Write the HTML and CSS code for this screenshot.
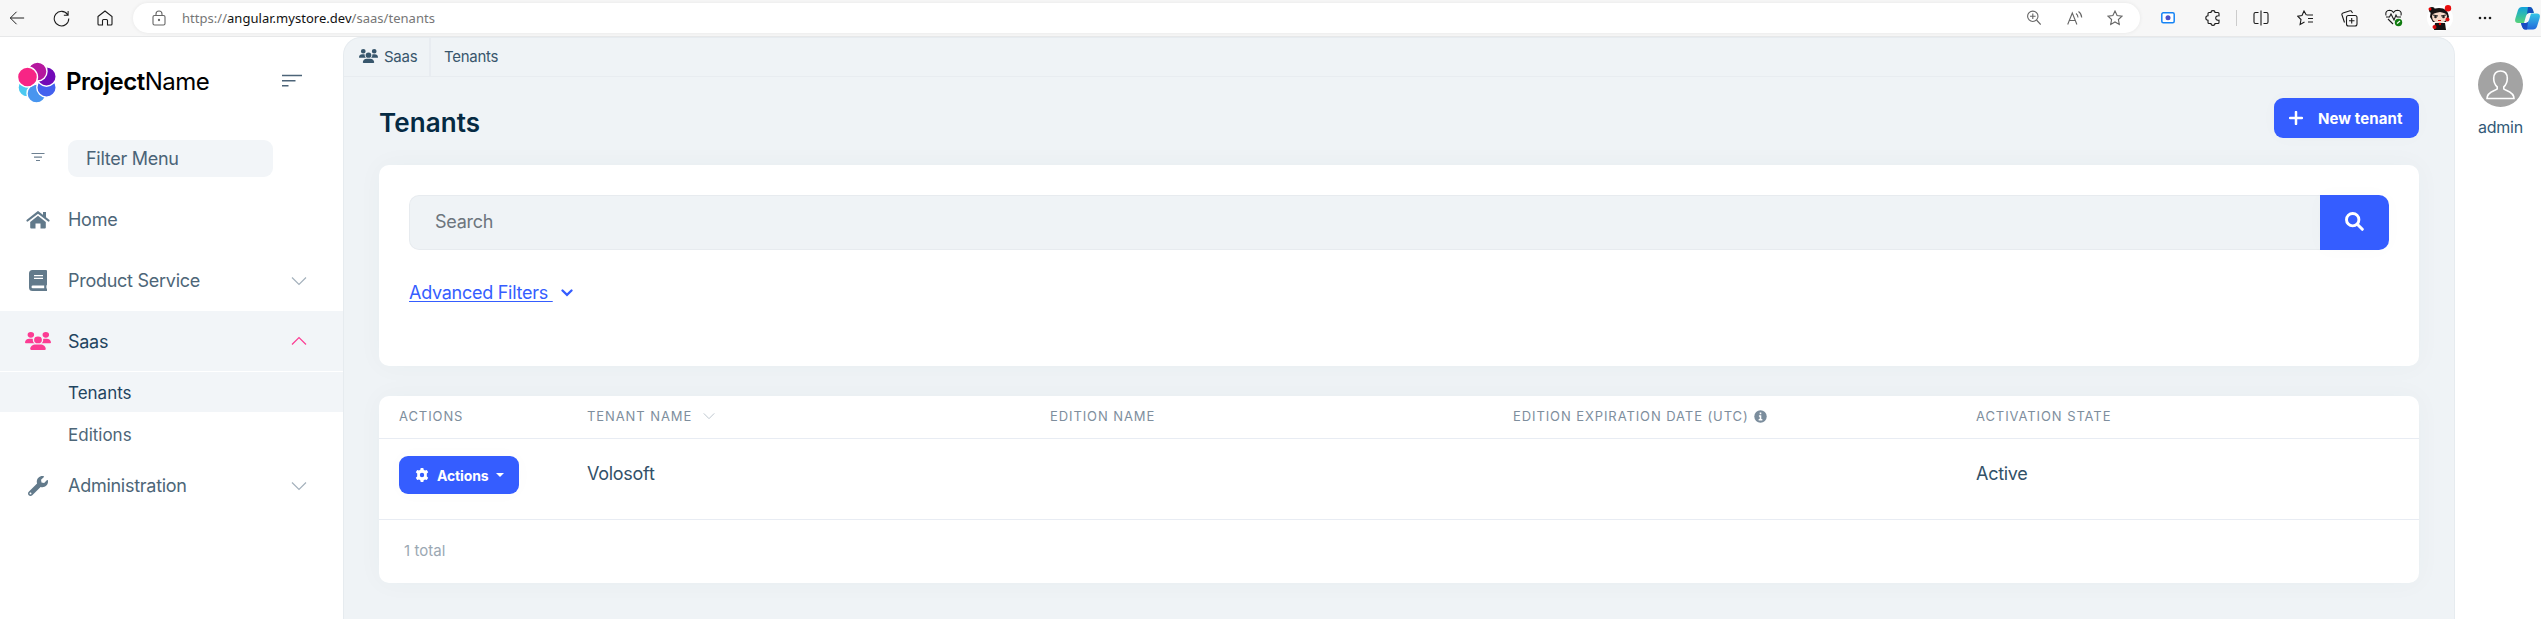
FILE: index.html
```html
<!DOCTYPE html>
<html lang="en">
<head>
<meta charset="utf-8">
<title>Tenants</title>
<link rel="stylesheet" href="styles.css">
</head>
<body>
<svg class="defs" width="0" height="0">
  <symbol id="users" viewBox="0 0 640 512"><path d="M144 0a80 80 0 1 1 0 160A80 80 0 1 1 144 0zM512 0a80 80 0 1 1 0 160A80 80 0 1 1 512 0zM0 298.700C0 239.800 47.800 192 106.700 192h42.700c15.900 0 31 3.500 44.600 9.700c-1.300 7.200-1.900 14.700-1.900 22.300c0 38.200 16.800 72.500 43.300 96H21.300C9.600 320 0 310.400 0 298.700zM405.300 320h-.7c26.600-23.500 43.300-57.800 43.300-96c0-7.600-.7-15-1.900-22.300c13.600-6.300 28.700-9.700 44.600-9.700h42.700C592.200 192 640 239.800 640 298.700c0 11.800-9.600 21.300-21.300 21.300H405.300zM224 224a96 96 0 1 1 192 0 96 96 0 1 1-192 0zM128 485.300C128 411.700 187.700 352 261.300 352H378.700C452.300 352 512 411.700 512 485.300c0 14.700-11.900 26.700-26.700 26.700H154.700c-14.700 0-26.700-11.900-26.700-26.700z"/></symbol>
  <symbol id="chev" viewBox="0 0 16 10"><path d="M1 1.500l7 7 7-7" fill="none" stroke="currentColor" stroke-width="1.200"/></symbol>
</svg>
<header class="browser">
  <svg class="nav back" viewBox="0 0 18 16"><path d="M17 8H1.500M8.500 1L1.500 8l7 7"/></svg>
  <svg class="nav reload" viewBox="0 0 18 18"><path d="M15.500 5A7.700 7.700 0 1 0 16.700 9M16 1v4.500h-4.500"/></svg>
  <svg class="nav home" viewBox="0 0 16 16"><path d="M1 6.500L8 1l7 5.500V14q0 1-1 1h-3.500v-4.500q0-1-1-1h-3q-1 0-1 1V15H2q-1 0-1-1z"/></svg>
  <div class="address">
    <svg class="lock" viewBox="0 0 14 16"><rect x="1" y="5.500" width="12" height="9.500" rx="1.500"/><path d="M4 5.500V4a3 3 0 0 1 6 0v1.500"/><circle cx="7" cy="10" r=".6"/></svg>
    <span class="url"><span>https://</span><b>angular.mystore.dev</b><span>/saas/tenants</span></span>
    <svg class="ai zoom" viewBox="0 0 14 16"><circle cx="5.800" cy="6.300" r="5.200"/><path d="M9.500 10l4.200 4.500M3 6.300h5.600M5.800 3.500v5.600"/></svg>
    <svg class="ai read" viewBox="0 0 16 16"><path d="M.7 14.500L5.300 3l4.600 11.500M2.300 10.500h6M9 3.500q2 1.500 2 4M11.500 1.500q3 2 3.200 6"/></svg>
    <svg class="ai star" viewBox="0 0 16 16"><path d="M8 1l2.100 4.500 4.900.6-3.600 3.400.9 5L8 12l-4.300 2.500.9-5L1 6.100l4.900-.6z"/></svg>
  </div>
  <div class="tools">
    <svg width="14" height="16" viewBox="0 0 14 16"><rect x=".8" y="2.800" width="12.400" height="10" rx="1.500" fill="#fff" stroke="#1684f5" stroke-width="1.500"/><circle cx="7" cy="7.800" r="2.500" fill="#4d51c8" stroke="none"/></svg>
    <svg class="puzzle" width="16" height="16" viewBox="0 0 16 16"><path d="M4 2.500h2a2 1.900 0 0 1 4 0h3q1 0 1 1v2.300q-3.300-.2-3.300 2.200t3.300 2.200v2.300q0 1-1 1h-3a2 1.900 0 0 1-4 0H4q-1 0-1-1v-2.300a2.200 2.200 0 0 1 0-4.400V3.500q0-1 1-1z"/></svg>
    <i class="sep"></i>
    <svg class="split" width="16" height="16" viewBox="0 0 16 16"><path d="M5.500 2.500h-3q-1.500 0-1.500 1.500v8q0 1.500 1.500 1.500h3M10.500 2.500h3q1.500 0 1.500 1.500v8q0 1.500-1.500 1.500h-3M8 .5v15"/></svg>
    <svg class="favs" width="17" height="16" viewBox="0 0 17 16"><path d="M9.500 5H16M11 8.500h5M11 12h5M9.300 5L7 1 5 5.500l-4.300.6 3.300 3.400-.9 5L7.500 12"/></svg>
    <svg class="coll" width="17" height="17" viewBox="0 0 17 17"><rect x="5.500" y="5.500" width="10.500" height="10.500" rx="2"/><path d="M10.700 8v5.500M8 10.700h5.500M3.500 12.500L1 5q-.5-1.500 1-2L9 .8q1.300-.3 1.800 1L11.500 3"/></svg>
    <svg class="heart" width="18" height="18" viewBox="0 0 18 18"><path d="M1 6.500Q0 1.500 4.500 1.300 7 1.300 8.500 3.500 10 1.300 12.500 1.300 17 1.500 16 6.500M1 8h3.500l1.500-3 3 6 2-5 1 2H16M3 10l5 5"/><circle cx="13.500" cy="13.500" r="3.700" fill="#107c10" stroke="none"/><path d="M12 14.500l3-2.500" stroke="#fff"/></svg>
    <svg class="avatar" width="26" height="26" viewBox="0 0 26 26"><g stroke="none"><circle cx="13" cy="13" r="13" fill="#fff"/><circle cx="5" cy="5" r="3" fill="#111"/><path d="M3 12Q3 3 12 3t10 9l-3 5H6z" fill="#171313"/><path d="M5 11q0-3 8-4 7 1 7 4 0 7-7.500 7T5 11z" fill="#f5d9c8"/><path d="M8 18h10l1 7H7z" fill="#171313"/><path d="M6 10l5 1M14 11l5-1" stroke="#222"/><circle cx="8.500" cy="12" r="1.300" fill="#222"/><circle cx="16.500" cy="12" r="1.300" fill="#222"/><path d="M11 15h3v1h-3z" fill="#d00"/><circle cx="3" cy="4" r="1.500" fill="#e00"/><circle cx="21" cy="3.300" r="3.200" fill="#e90c0c"/><circle cx="20.500" cy="14.500" r="2" fill="#d90b0b"/><circle cx="7.500" cy="22" r="2" fill="#d90b0b"/><circle cx="13" cy="19" r="1.200" fill="#e00"/></g></svg>
    <svg class="dots" width="14" height="4" viewBox="0 0 14 4"><g stroke="none" fill="#1b1b1b"><circle cx="2" cy="2" r="1.300"/><circle cx="7" cy="2" r="1.300"/><circle cx="12" cy="2" r="1.300"/></g></svg>
    <svg class="pilot" width="25" height="23" viewBox="0 0 25 23"><defs><linearGradient id="g1" x1="0" y1="0" x2="0" y2="1"><stop offset="0" stop-color="#13a3dd"/><stop offset=".6" stop-color="#37c1a0"/><stop offset="1" stop-color="#5bd27a"/></linearGradient><linearGradient id="g2" x1="0" y1="0" x2="0" y2="1"><stop offset="0" stop-color="#35c6e6"/><stop offset="1" stop-color="#2268dc"/></linearGradient></defs><g stroke="none"><path d="M7 0h8q2 0 3 3l.8 3H14q-2 0-3 3l-2 7H3q-4 0-2.500-5L3 3q1-3 4-3z" fill="url(#g1)"/><path d="M13 0h2q2 0 3 3l.8 3H14q-1 0-2 1z" fill="#164fba"/><path d="M18 22.500h-8q-2 0-3-3L6 16h5q2 0 3-3l2-6.500h6q4 0 2.500 5L22 19.500q-1 3-4 3z" fill="url(#g2)"/><path d="M12 22.500h-2q-2 0-3-3L6 16h5q1 0 2-1z" fill="#1a4bc2"/></g></svg>
  </div>
</header>
<div class="app">
  <aside class="side">
    <div class="brand">
      <svg class="logo" viewBox="0 0 38 41"><g stroke="#fff" stroke-width="1.400"><circle cx="9.500" cy="25.500" r="9.500" fill="#4cc9f0"/><circle cx="18.500" cy="31.500" r="9.500" fill="#4895ef"/><circle cx="28.500" cy="25.500" r="9.700" fill="#4361ee"/><circle cx="28.500" cy="14.500" r="9.700" fill="#7209b7"/><circle cx="19.500" cy="9.500" r="9.500" fill="#b5179e"/><circle cx="9.500" cy="15" r="10" fill="#f72585"/></g></svg>
      <span class="name"><b>Project</b>Name</span>
      <svg class="toggle" viewBox="0 0 20 13"><path d="M0 1.500h20M0 6.800h13.500M0 11.800h6.500"/></svg>
    </div>
    <div class="filter">
      <svg viewBox="0 0 14 10"><path d="M.5 1.500h13M3 5.200h8M5 8.500h4"/></svg>
      <div class="filter-box"><span>Filter Menu</span></div>
    </div>
    <nav>
      <a class="item"><svg class="ico" width="24" height="18" viewBox="0 0 24 18"><path d="M1.500 9.500L12 1.300l10.500 8.200" fill="none" stroke="currentColor" stroke-width="2.200" stroke-linecap="round"/><path d="M17 1h3v6.500l-3-2.500zM12 4.800l7.800 6.200v5.500q0 1-1 1h-4.300v-5h-5v5H5.200q-1 0-1-1V11z"/></svg><span>Home</span></a>
      <a class="item"><svg class="ico" width="18" height="21" viewBox="0 0 18 21"><path fill-rule="evenodd" d="M3.500 0H17q1 0 1 1v13.500q0 .8-.6 1v3h.6V21H3.500Q0 21 0 17.500v-14Q0 0 3.500 0zM5 5v1.200h9V5zM5 7.700v1.200h9V7.700zM3.800 15.600q-1.300 0-1.300 1.300t1.300 1.400h11.400v-2.700z"/></svg><span>Product Service</span><svg class="chev"><use href="#chev"/></svg></a>
      <a class="item active"><svg class="ico" width="26" height="18" viewBox="0 0 640 512" preserveAspectRatio="none"><use href="#users"/></svg><span>Saas</span><svg class="chev up"><use href="#chev"/></svg></a>
      <div class="sub">
        <a class="on"><span>Tenants</span></a>
        <a><span>Editions</span></a>
      </div>
      <a class="item"><svg class="ico" width="20" height="20" viewBox="0 0 512 512"><path d="M507.700 109.100c-2.200-9-13.500-12.100-20.100-5.500l-74.400 74.400-67.900-11.300L334 98.900l74.400-74.400c6.600-6.600 3.400-17.900-5.700-20.200-47.400-11.700-99.600.9-136.600 37.900-39.600 39.600-50.500 97.100-34.100 147.200L18.700 402.800c-25 25-25 65.500 0 90.500s65.500 25 90.500 0l213.200-213.200c50.100 16.700 107.500 5.700 147.400-34.200 37.100-37.100 49.700-89.300 37.900-136.800zM64 472c-13.300 0-24-10.700-24-24s10.700-24 24-24 24 10.700 24 24-10.700 24-24 24z"/></svg><span>Administration</span><svg class="chev"><use href="#chev"/></svg></a>
    </nav>
  </aside>
  <main>
    <div class="crumbs">
      <div class="crumb first"><svg width="19" height="14" viewBox="0 0 640 512" preserveAspectRatio="none"><use href="#users"/></svg><span>Saas</span></div>
      <div class="crumb"><span>Tenants</span></div>
    </div>
    <div class="content">
      <div class="head">
        <h1>Tenants</h1>
        <button class="btn new"><svg width="14" height="14" viewBox="0 0 14 14"><path d="M7 1v12M1 7h12" stroke="#fff" stroke-width="2.500" stroke-linecap="round"/></svg><span>New tenant</span></button>
      </div>
      <section class="card search-card">
        <div class="search">
          <div class="input"><span>Search</span></div>
          <button class="btn go"><svg width="19" height="19" viewBox="0 0 19 19"><circle cx="7.700" cy="7.700" r="6.200" fill="none" stroke="#fff" stroke-width="2.900"/><path d="M12.300 12.300l5 5" stroke="#fff" stroke-width="3" stroke-linecap="round"/></svg></button>
        </div>
        <a class="adv"><span>Advanced Filters&nbsp;</span><svg width="12" height="8" viewBox="0 0 12 8"><path d="M1.500 1.500L6 5.800l4.500-4.300" fill="none" stroke="currentColor" stroke-width="2.300" stroke-linecap="round"/></svg></a>
      </section>
      <section class="card table">
        <div class="row thead">
          <div><span>ACTIONS</span></div>
          <div><span>TENANT NAME</span><svg class="sort" viewBox="0 0 16 10"><use href="#chev"/></svg></div>
          <div><span>EDITION NAME</span></div>
          <div><span>EDITION EXPIRATION DATE (UTC)</span><svg class="info" viewBox="0 0 14 14"><circle cx="7" cy="7" r="6.700"/><path d="M7 2.600v2M5.300 6.500H7v4M5 10.500h4" fill="none" stroke="#fff" stroke-width="1.700"/></svg></div>
          <div><span>ACTIVATION STATE</span></div>
        </div>
        <div class="row tbody">
          <div><button class="btn act"><svg width="14" height="14" viewBox="0 0 14 14"><path fill="#fff" fill-rule="evenodd" d="M5.700 0h2.600l.4 1.800 1.300.8L11.800 2l1.400 2.300-1.400 1.200v3l1.400 1.200-1.400 2.300-1.800-.6-1.300.8L8.300 14H5.700l-.4-1.800-1.300-.8-1.800.6L.8 9.700l1.400-1.200v-3L.8 4.300 2.200 2l1.800.6 1.300-.8zM7 4.800a2.200 2.200 0 1 0 0 4.400 2.200 2.200 0 0 0 0-4.400z"/></svg><span>Actions</span><i class="caret"></i></button></div>
          <div class="val"><span>Volosoft</span></div><div></div><div></div><div class="val"><span>Active</span></div>
        </div>
        <div class="total"><span>1 total</span></div>
      </section>
    </div>
  </main>
  <aside class="user">
    <svg width="45" height="45" viewBox="0 0 45 45"><circle cx="22.500" cy="22.500" r="22.500" fill="#a3a3a3"/><path d="M22.500 9c4.500 0 6.800 3 6.800 7.500 0 3.500-1.500 6.500-3.500 8.300v2.200c2.500 2 10.200 2.500 10.200 9.500H9c0-7 7.700-7.500 10.200-9.500v-2.200c-2-1.800-3.500-4.800-3.500-8.300C15.700 12 18 9 22.500 9z" fill="none" stroke="#fff" stroke-width="1.600"/></svg>
    <span>admin</span>
  </aside>
</div>
</body>
</html>
```
FILE: styles.css
```css
* { box-sizing: border-box; }
body { margin: 0; width: 2541px; height: 619px; overflow: hidden; background: #fff; color: #325168; font-family: Inter, "Liberation Sans", sans-serif; font-size: 18px; letter-spacing: -.27px; }
.defs { position: absolute; }
svg { flex: none; fill: currentColor; }
button { border: 0; font-family: inherit; }
span { white-space: nowrap; }

/* Browser toolbar */
.browser { display: flex; align-items: center; height: 37px; background: #f7f7f7; border-bottom: 1px solid #e7e8e9; padding-left: 9px; }
.browser svg { fill: none; stroke: #1b1b1b; stroke-width: 1.1; }
.nav { flex: none; height: 16px; }
.back { width: 16px; }
.reload { width: 17px; height: 17px; margin-left: 28px; }
.home { width: 16px; margin-left: 27px; }
.address { display: flex; flex: none; align-items: center; width: 2007px; height: 30px; margin-left: 20px; padding: 0 17px 0 19px; border-radius: 15px; background: #fff; box-shadow: 0 0 4px rgba(0, 0, 0, .07); }
.browser .address svg { stroke: #666; }
.lock { width: 14px; height: 16px; }
.url { margin-left: 16px; font: 13px "Noto Sans", sans-serif; letter-spacing: .03px; color: #767676; }
.url b { font-weight: 400; color: #111; }
.ai { width: 16px; height: 16px; }
.ai.zoom { width: 14px; margin-left: auto; }
.star { margin-left: 24px; }
.read { margin-left: 26px; }
.tools { display: flex; flex: none; align-items: center; margin-left: 21px; }
.sep { width: 1px; height: 16px; margin-left: 15px; background: #ccc; }
.puzzle { margin-left: 30px; }
.split { margin-left: 16px; }
.favs { margin-left: 28px; }
.coll, .heart { margin-left: 27px; }
.avatar { margin-left: 24px; }
.dots { margin-left: 25px; }
.pilot { margin-left: 23px; }

/* Sidebar */
.app { display: flex; height: 582px; }
.side { width: 343px; flex: none; }
.brand { display: flex; align-items: center; height: 90px; padding: 0 41px 0 18px; }
.logo { width: 38px; height: 41px; }
.name { margin: -1px 0 0 10px; color: #000; font-size: 24px; letter-spacing: -.48px; }
.name b { font-weight: 600; }
.toggle { width: 20px; height: 13px; margin-left: auto; margin-bottom: 3px; stroke: #4c6478; stroke-width: 1.6; }
.filter { display: flex; align-items: center; height: 37px; margin-top: 13px; padding-left: 31px; color: #4a6377; }
.filter svg { width: 14px; height: 10px; margin-bottom: 4px; stroke: #6d8091; stroke-width: 1.2; }
.filter-box { display: flex; align-items: center; width: 205px; height: 37px; margin-left: 23px; padding: 0 0 1px 18px; border-radius: 9px; background: #f2f5f8; }
nav { padding-top: 12px; }
.item { display: grid; grid-template-columns: 40px 1fr 16px; column-gap: 10px; align-items: center; height: 61px; padding: 0 36px 0 18px; color: #4d6678; }
.item .ico { justify-self: center; color: #627a8b; }
.chev { width: 16px; height: 10px; color: #a4b1bc; }
.up { transform: scaleY(-1); }
.active { height: 60px; background: #f2f5f8; color: #1f4460; }
.active .ico, .active .chev { color: #fc3c93; }
.sub { padding-top: 1px; }
.sub a { display: flex; align-items: center; height: 43px; padding: 3px 0 0 68px; font-size: 17px; letter-spacing: 0; color: #4d6678; }
.sub .on { height: 40px; padding-top: 1px; background: #f2f5f8; color: #1f4460; }

/* Page */
main { flex: 1; background: #eff3f6; border: 1px solid #e6ebef; border-bottom: 0; border-radius: 18px 18px 0 0; }
.crumbs { display: flex; height: 39px; border-bottom: 1px solid #e8ecf0; font-size: 15px; color: #38566c; }
.crumb { display: flex; align-items: center; padding: 0 13px 2px; }
.crumb.first { width: 87px; padding: 0 12px 2px 15px; gap: 6px; border-right: 2px solid #e8ecf1; }
.content { padding: 0 35px; }
.head { display: flex; justify-content: space-between; height: 88px; padding-top: 21px; }
h1 { margin: 9px 0 0; font-size: 26px; line-height: 32px; font-weight: 600; letter-spacing: .1px; color: #052a43; }
.btn { display: flex; align-items: center; background: #355dff; color: #fff; border-radius: 9px; font-weight: 700; letter-spacing: 0; padding: 0; box-shadow: 0 0 20px rgba(0, 60, 60, .02); }
.new { width: 145px; height: 40px; padding-left: 15px; gap: 15px; font-size: 15px; letter-spacing: .1px; }
.card { background: #fff; border-radius: 10px; box-shadow: 0 0 26px rgba(20, 80, 90, .035); }
.search-card { height: 201px; padding: 30px; }
.search { display: flex; height: 55px; }
.input { display: flex; align-items: center; flex: 1; padding: 0 0 2px 25px; background: #eff3f6; border: 1px solid #e7ebef; border-right: 0; border-radius: 10px 0 0 10px; color: #6c757d; }
.go { width: 69px; justify-content: center; padding-bottom: 2px; border-radius: 0 10px 10px 0; }
.adv { display: flex; align-items: center; margin-top: 32px; gap: 8px; color: #355dff; }
.adv span { text-decoration: underline; text-underline-offset: 2px; text-decoration-thickness: 1px; }
.table { height: 187px; margin-top: 30px; }
.row { display: grid; grid-template-columns: 188px 463px 463px 463px 1fr; padding-left: 20px; border-bottom: 1px solid #e8ecf3; }
.row > div { display: flex; align-items: center; }
.thead { height: 43px; padding-bottom: 2px; font-size: 13px; letter-spacing: .91px; color: #7e8e9d; }
.sort { width: 12px; height: 8px; margin-left: 11px; color: #b5bfc8; }
.info { width: 13px; height: 13px; margin-left: 5px; color: #7b8d9d; }
.tbody { height: 81px; padding-bottom: 8px; }
.row > .val { padding-bottom: 3px; }
.act { width: 120px; height: 38px; padding-left: 16px; gap: 8px; font-size: 14px; letter-spacing: -.15px; }
.caret { border: 4px solid transparent; border-top-color: #fff; border-bottom: 0; }
.total { display: flex; align-items: center; height: 62px; padding: 0 0 1px 25px; font-size: 15px; letter-spacing: .05px; color: #9ba8b3; }

.user { display: flex; flex-direction: column; align-items: center; width: 86px; padding: 25px 0 0 5px; flex: none; font-size: 16px; gap: 10px; color: #325a78; }
```
